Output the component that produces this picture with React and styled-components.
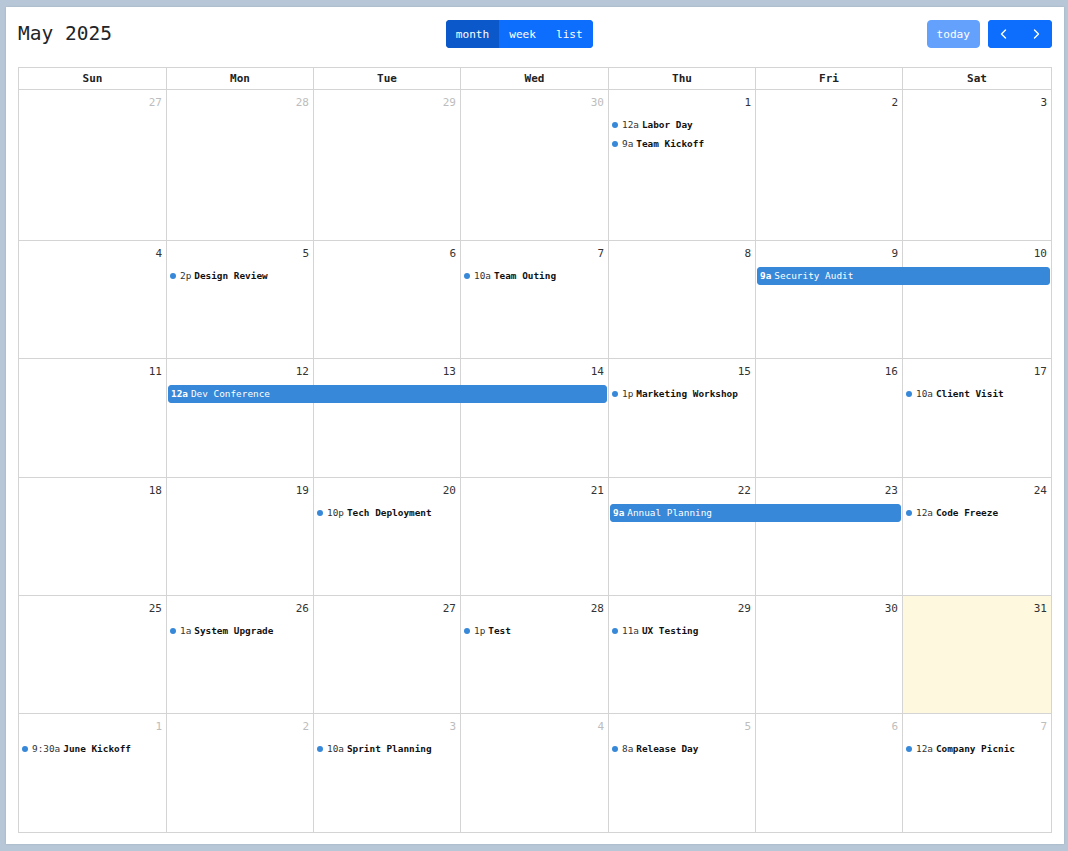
import React from "react";
import styled, { createGlobalStyle } from "styled-components";

const Global = createGlobalStyle`
  html, body { margin: 0; padding: 0; }
  body {
    background: #b8c7d7;
    font-family: "DejaVu Sans Mono", "Liberation Mono", monospace;
    color: #333;
  }
  #root { padding: 7px 4px 7px 6px; }
`;

const COLS = "148px 147px 147px 148px 147px 147px 149px";

const Panel = styled.div`
  width: 1058px;
  height: 837px;
  box-sizing: border-box;
  background: #fff;
  padding: 13px 12px 11px 12px;
  box-shadow: 0 0 2px rgba(0, 0, 0, 0.12);
`;

const Toolbar = styled.div`
  display: flex;
  justify-content: space-between;
  align-items: center;
  height: 28px;
  margin-bottom: 19px;
`;

const Title = styled.h2`
  margin: 0;
  font-size: 19.5px;
  font-weight: normal;
  color: #212529;
  line-height: 28px;
`;

const Right = styled.div`
  display: flex;
  gap: 8px;
`;

const Group = styled.div`
  display: flex;
  border-radius: 4px;
  overflow: hidden;
`;

const Btn = styled.button`
  font-family: inherit;
  font-size: 11.1px;
  height: 28px;
  padding: 0 ${(p) => (p.$icon ? "0" : "9px")};
  width: ${(p) => (p.$icon ? "32px" : "auto")};
  border: 1px solid ${(p) => (p.$active ? "#0a58ca" : p.$disabled ? "#63a1fd" : "#0d6efd")};
  background: ${(p) => (p.$active ? "#0a58ca" : p.$disabled ? "#63a1fd" : "#0d6efd")};
  color: #fff;
  border-radius: ${(p) => (p.$solo ? "4px" : "0")};
  display: flex;
  align-items: center;
  justify-content: center;
  cursor: pointer;
`;

const Month = styled.div`
  border-left: 1px solid #d4d4d4;
  border-top: 1px solid #d4d4d4;
`;

const HeadRow = styled.div`
  display: grid;
  grid-template-columns: ${COLS};
`;

const HeadCell = styled.div`
  height: 22px;
  box-sizing: border-box;
  border-right: 1px solid #d4d4d4;
  border-bottom: 1px solid #d4d4d4;
  text-align: center;
  font-size: 11px;
  font-weight: bold;
  line-height: 22px;
  color: #222;
`;

const Week = styled.div`
  display: grid;
  grid-template-columns: ${COLS};
  grid-template-rows: 25px 19px 19px 1fr;
  height: ${(p) => p.$h}px;
`;

const Cell = styled.div`
  grid-row: 1 / -1;
  grid-column: ${(p) => p.$col};
  box-sizing: border-box;
  border-right: 1px solid #d4d4d4;
  border-bottom: 1px solid #d4d4d4;
  background: ${(p) => (p.$today ? "#fef8de" : "#fff")};
  text-align: right;
  padding: 5px 4px 0 0;
  font-size: 11px;
  line-height: 16px;
  color: ${(p) => (p.$other ? "#bdbdbd" : "#333")};
`;

const DotEvent = styled.div`
  grid-row: ${(p) => p.$row};
  grid-column: ${(p) => p.$col};
  display: flex;
  align-items: center;
  padding-left: 3px;
  font-size: 9.4px;
  white-space: nowrap;
  overflow: hidden;
  position: relative;
`;

const Dot = styled.span`
  width: 6px;
  height: 6px;
  border-radius: 50%;
  background: #3788d8;
  margin-right: 4px;
  flex: none;
`;

const Time = styled.span`
  color: #333;
  margin-right: 3px;
`;

const EvTitle = styled.span`
  color: #111;
  font-weight: bold;
`;

const Bar = styled.div`
  grid-row: ${(p) => p.$row};
  grid-column: ${(p) => p.$col} / span ${(p) => p.$span};
  margin: 1px 2px 0 1px;
  height: 18px;
  box-sizing: border-box;
  background: #3788d8;
  border: 1px solid #3788d8;
  border-radius: 3px;
  color: #fff;
  font-size: 9.4px;
  line-height: 16px;
  padding-left: 2px;
  white-space: nowrap;
  overflow: hidden;
  position: relative;
`;

const BarTime = styled.span`
  font-weight: bold;
  margin-right: 3px;
`;

const Chevron = ({ dir }) => (
  <svg width="12" height="12" viewBox="0 0 12 12" fill="none" stroke="#fff" strokeWidth="1.4" strokeLinecap="round" strokeLinejoin="round">
    {dir === "left" ? <polyline points="7.5,2 3.5,6 7.5,10" /> : <polyline points="4.5,2 8.5,6 4.5,10" />}
  </svg>
);

const days = ["Sun", "Mon", "Tue", "Wed", "Thu", "Fri", "Sat"];

const weeks = [
  {
    h: 151,
    nums: [27, 28, 29, 30, 1, 2, 3],
    other: [1, 1, 1, 1, 0, 0, 0],
    dots: [
      { col: 5, row: 2, t: "12a", title: "Labor Day" },
      { col: 5, row: 3, t: "9a", title: "Team Kickoff" },
    ],
    bars: [],
  },
  {
    h: 118,
    nums: [4, 5, 6, 7, 8, 9, 10],
    dots: [
      { col: 2, row: 2, t: "2p", title: "Design Review" },
      { col: 4, row: 2, t: "10a", title: "Team Outing" },
    ],
    bars: [{ col: 6, span: 2, row: 2, t: "9a", title: "Security Audit" }],
  },
  {
    h: 119,
    nums: [11, 12, 13, 14, 15, 16, 17],
    dots: [
      { col: 5, row: 2, t: "1p", title: "Marketing Workshop" },
      { col: 7, row: 2, t: "10a", title: "Client Visit" },
    ],
    bars: [{ col: 2, span: 3, row: 2, t: "12a", title: "Dev Conference" }],
  },
  {
    h: 118,
    nums: [18, 19, 20, 21, 22, 23, 24],
    dots: [
      { col: 3, row: 2, t: "10p", title: "Tech Deployment" },
      { col: 7, row: 2, t: "12a", title: "Code Freeze" },
    ],
    bars: [{ col: 5, span: 2, row: 2, t: "9a", title: "Annual Planning" }],
  },
  {
    h: 118,
    nums: [25, 26, 27, 28, 29, 30, 31],
    today: 6,
    dots: [
      { col: 2, row: 2, t: "1a", title: "System Upgrade" },
      { col: 4, row: 2, t: "1p", title: "Test" },
      { col: 5, row: 2, t: "11a", title: "UX Testing" },
    ],
    bars: [],
  },
  {
    h: 119,
    nums: [1, 2, 3, 4, 5, 6, 7],
    other: [1, 1, 1, 1, 1, 1, 1],
    dots: [
      { col: 1, row: 2, t: "9:30a", title: "June Kickoff" },
      { col: 3, row: 2, t: "10a", title: "Sprint Planning" },
      { col: 5, row: 2, t: "8a", title: "Release Day" },
      { col: 7, row: 2, t: "12a", title: "Company Picnic" },
    ],
    bars: [],
  },
];

export default function App() {
  return (
    <>
      <Global />
      <Panel>
        <Toolbar>
          <Title>May 2025</Title>
          <Group>
            <Btn $active>month</Btn>
            <Btn>week</Btn>
            <Btn>list</Btn>
          </Group>
          <Right>
            <Btn $disabled $solo>today</Btn>
            <Group>
              <Btn $icon aria-label="prev">
                <Chevron dir="left" />
              </Btn>
              <Btn $icon aria-label="next">
                <Chevron dir="right" />
              </Btn>
            </Group>
          </Right>
        </Toolbar>
        <Month>
          <HeadRow>
            {days.map((d) => (
              <HeadCell key={d}>{d}</HeadCell>
            ))}
          </HeadRow>
          {weeks.map((w, wi) => (
            <Week key={wi} $h={w.h}>
              {w.nums.map((n, i) => (
                <Cell
                  key={i}
                  $col={i + 1}
                  $other={w.other && w.other[i]}
                  $today={w.today === i}
                >
                  {n}
                </Cell>
              ))}
              {w.bars.map((b, i) => (
                <Bar key={"b" + i} $col={b.col} $span={b.span} $row={b.row}>
                  <BarTime>{b.t}</BarTime>
                  {b.title}
                </Bar>
              ))}
              {w.dots.map((e, i) => (
                <DotEvent key={"d" + i} $col={e.col} $row={e.row}>
                  <Dot />
                  <Time>{e.t}</Time>
                  <EvTitle>{e.title}</EvTitle>
                </DotEvent>
              ))}
            </Week>
          ))}
        </Month>
      </Panel>
    </>
  );
}
